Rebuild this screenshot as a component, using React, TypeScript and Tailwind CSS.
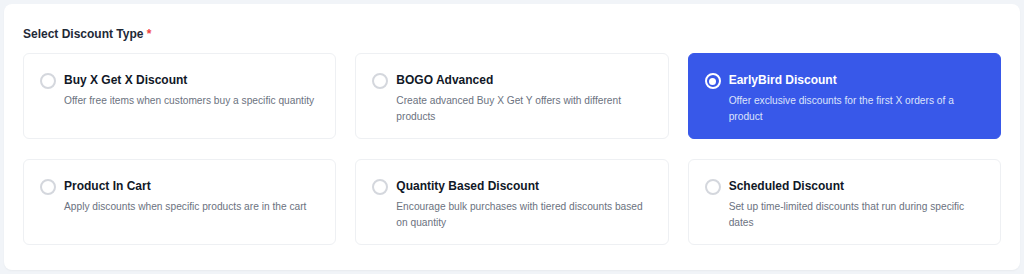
import { useState } from "react";

const discountTypes = [
  { id: "bxgx", title: "Buy X Get X Discount", desc: "Offer free items when customers buy a specific quantity" },
  { id: "bogo", title: "BOGO Advanced", desc: "Create advanced Buy X Get Y offers with different products" },
  { id: "earlybird", title: "EarlyBird Discount", desc: "Offer exclusive discounts for the first X orders of a product" },
  { id: "cart", title: "Product In Cart", desc: "Apply discounts when specific products are in the cart" },
  { id: "quantity", title: "Quantity Based Discount", desc: "Encourage bulk purchases with tiered discounts based on quantity" },
  { id: "scheduled", title: "Scheduled Discount", desc: "Set up time-limited discounts that run during specific dates" },
];

export default function App() {
  const [selected, setSelected] = useState("earlybird");

  return (
    <div className="min-h-[274px] bg-[#f1f4f8] p-1 font-['Liberation_Sans',Arial,sans-serif]">
      <div className="rounded-lg bg-white px-[19px] pt-[20px] pb-[25px] shadow-[0_1px_2px_rgba(0,0,0,0.04)]">
        <div className="mb-[9px] text-[12px] leading-5 font-bold text-[#1f2937]">
          Select Discount Type <span className="text-[#ef4444]">*</span>
        </div>
        <div className="grid grid-cols-3 gap-x-[19px] gap-y-[20px]">
          {discountTypes.map((item) => {
            const active = selected === item.id;
            return (
              <button
                key={item.id}
                onClick={() => setSelected(item.id)}
                className={
                  active
                    ? "flex gap-[8px] rounded-md border border-[#3858e9] bg-[#3858e9] px-4 pt-4 pb-[13px] text-left"
                    : "flex gap-[8px] rounded-md border border-[#eef0f3] bg-white px-4 pt-4 pb-[13px] text-left"
                }
              >
                <span
                  className={
                    active
                      ? "mt-[3px] flex h-4 w-4 shrink-0 items-center justify-center rounded-full border-2 border-white"
                      : "mt-[3px] flex h-4 w-4 shrink-0 items-center justify-center rounded-full border-2 border-[#d4d7dd]"
                  }
                >
                  {active && <span className="h-[7px] w-[7px] rounded-full bg-white" />}
                </span>
                <span className="flex flex-col">
                  <span className={active ? "text-[12px] leading-5 font-bold text-white" : "text-[12px] leading-5 font-bold text-[#111827]"}>
                    {item.title}
                  </span>
                  <span className={active ? "mt-[3px] text-[10.2px] leading-4 text-[#dce3fb]" : "mt-[3px] text-[10.2px] leading-4 text-[#6b7280]"}>
                    {item.desc}
                  </span>
                </span>
              </button>
            );
          })}
        </div>
      </div>
    </div>
  );
}
